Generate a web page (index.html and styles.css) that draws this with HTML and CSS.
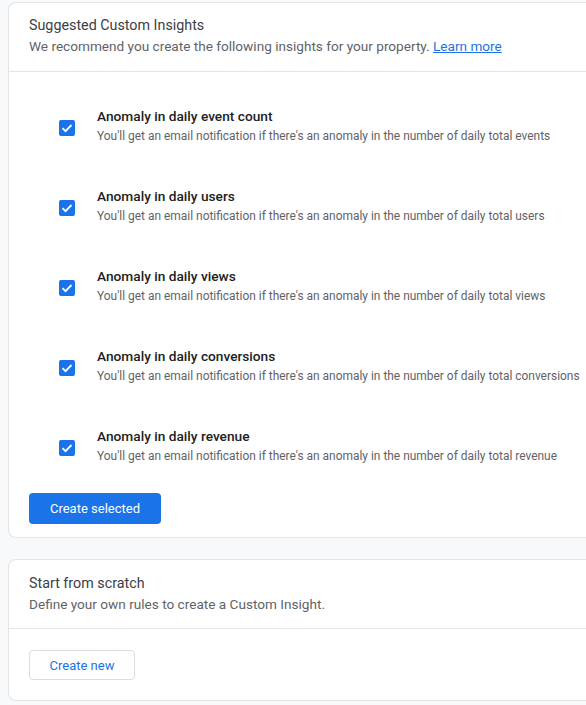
FILE: index.html
```html
<!DOCTYPE html>
<html>
<head>
<meta charset="utf-8">
<link rel="stylesheet" href="styles.css">
</head>
<body>
<div class="page">
  <section class="card">
    <header class="card-head">
      <h2 class="card-title">Suggested Custom Insights</h2>
      <p class="card-sub">We recommend you create the following insights for your property. <a class="link" href="#">Learn more</a></p>
    </header>
    <div class="card-body">
      <ul class="list">
        <li class="item">
          <span class="check"><svg viewBox="0 0 16 16" width="16" height="16"><path d="M3.5 8.2l3 3 6-6.2" fill="none" stroke="#fff" stroke-width="1.8"/></svg></span>
          <div class="item-text">
            <div class="item-title">Anomaly in daily event count</div>
            <div class="item-desc">You'll get an email notification if there's an anomaly in the number of daily total events</div>
          </div>
        </li>
        <li class="item">
          <span class="check"><svg viewBox="0 0 16 16" width="16" height="16"><path d="M3.5 8.2l3 3 6-6.2" fill="none" stroke="#fff" stroke-width="1.8"/></svg></span>
          <div class="item-text">
            <div class="item-title">Anomaly in daily users</div>
            <div class="item-desc">You'll get an email notification if there's an anomaly in the number of daily total users</div>
          </div>
        </li>
        <li class="item">
          <span class="check"><svg viewBox="0 0 16 16" width="16" height="16"><path d="M3.5 8.2l3 3 6-6.2" fill="none" stroke="#fff" stroke-width="1.8"/></svg></span>
          <div class="item-text">
            <div class="item-title">Anomaly in daily views</div>
            <div class="item-desc">You'll get an email notification if there's an anomaly in the number of daily total views</div>
          </div>
        </li>
        <li class="item">
          <span class="check"><svg viewBox="0 0 16 16" width="16" height="16"><path d="M3.5 8.2l3 3 6-6.2" fill="none" stroke="#fff" stroke-width="1.8"/></svg></span>
          <div class="item-text">
            <div class="item-title">Anomaly in daily conversions</div>
            <div class="item-desc">You'll get an email notification if there's an anomaly in the number of daily total conversions</div>
          </div>
        </li>
        <li class="item">
          <span class="check"><svg viewBox="0 0 16 16" width="16" height="16"><path d="M3.5 8.2l3 3 6-6.2" fill="none" stroke="#fff" stroke-width="1.8"/></svg></span>
          <div class="item-text">
            <div class="item-title">Anomaly in daily revenue</div>
            <div class="item-desc">You'll get an email notification if there's an anomaly in the number of daily total revenue</div>
          </div>
        </li>
      </ul>
      <button class="btn btn-primary">Create selected</button>
    </div>
  </section>

  <section class="card card-2">
    <header class="card-head card-head-2">
      <h2 class="card-title">Start from scratch</h2>
      <p class="card-sub">Define your own rules to create a Custom Insight.</p>
    </header>
    <div class="card-body card-body-2">
      <button class="btn btn-outline">Create new</button>
    </div>
  </section>
</div>
</body>
</html>
```
FILE: styles.css
```css
* { box-sizing: border-box; }
html, body {
  margin: 0;
  padding: 0;
  background: #f8f9fa;
  overflow: hidden;
}
body {
  font-family: Roboto, "Liberation Sans", Arial, sans-serif;
  color: #202124;
}
.page {
  padding: 2px 0 0 8px;
  width: 586px;
}
.card {
  background: #fff;
  border: 1px solid #e3e4e6;
  border-right: none;
  border-radius: 8px 0 0 8px;
}
.card-2 {
  margin-top: 21px;
}
.card-head {
  padding: 12px 20px 15px;
  border-bottom: 1px solid #e3e4e6;
}
.card-head-2 {
  padding-top: 13px;
  padding-bottom: 14px;
}
.card-title {
  margin: 0;
  font-size: 14.3px;
  font-weight: 400;
  line-height: 20px;
  color: #3c4043;
}
.card-sub {
  margin: 1px 0 0;
  font-size: 13.6px;
  line-height: 20px;
  color: #5f6368;
}
.link {
  color: #1a73e8;
  text-decoration: underline;
}
.card-body {
  padding: 34px 0 13px 20px;
}
.card-body-2 {
  padding-top: 21px;
  padding-bottom: 20px;
}
.list {
  list-style: none;
  margin: 0;
  padding: 0 0 0 30px;
  display: flex;
  flex-direction: column;
  gap: 41px;
}
.item {
  display: flex;
  align-items: flex-start;
  gap: 22px;
}
.check {
  flex: none;
  width: 16px;
  height: 16px;
  margin-top: 14px;
  background: #1a73e8;
  border-radius: 2px;
  display: flex;
}
.item-title {
  font-size: 13.7px;
  font-weight: 500;
  line-height: 20px;
  color: #202124;
}
.item-desc {
  font-size: 11.95px;
  line-height: 18px;
  margin-top: 1px;
  color: #5f6368;
  white-space: nowrap;
}
.btn {
  font-family: inherit;
  font-size: 13px;
  line-height: 20px;
  border-radius: 4px;
  padding: 5px 0;
  white-space: nowrap;
  text-align: center;
  cursor: pointer;
}
.btn-primary {
  margin-top: 28px;
  width: 132px;
  height: 31px;
  background: #1a73e8;
  color: #fff;
  border: none;
}
.btn-outline {
  width: 106px;
  height: 30px;
  background: #fff;
  color: #1a73e8;
  border: 1px solid #dadce0;
}
```
